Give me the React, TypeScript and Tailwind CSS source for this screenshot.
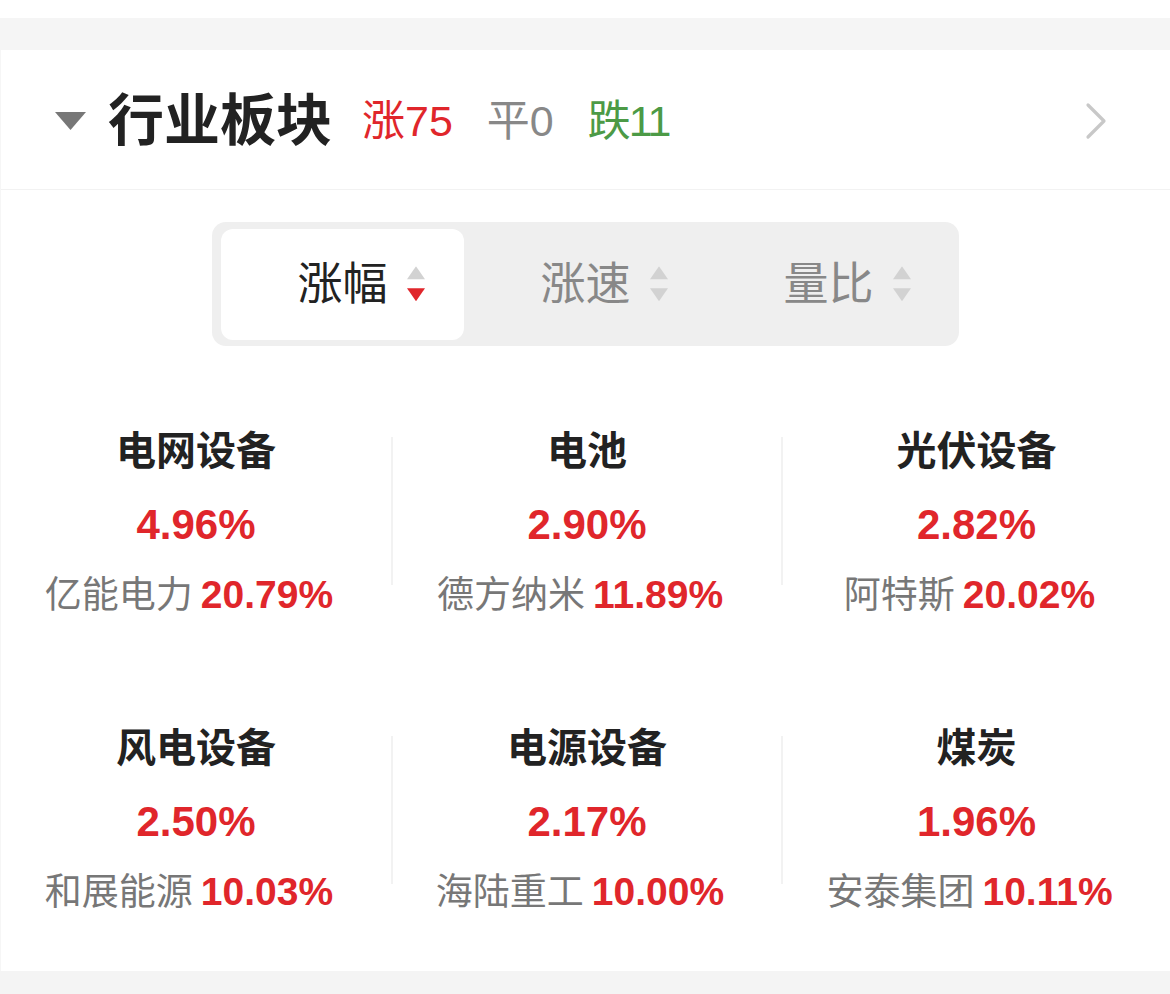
import React from "react";

const cells = [
  { name: "电网设备", pct: "4.96%", stock: "亿能电力", sp: "20.79%" },
  { name: "电池", pct: "2.90%", stock: "德方纳米", sp: "11.89%" },
  { name: "光伏设备", pct: "2.82%", stock: "阿特斯", sp: "20.02%" },
  { name: "风电设备", pct: "2.50%", stock: "和展能源", sp: "10.03%" },
  { name: "电源设备", pct: "2.17%", stock: "海陆重工", sp: "10.00%" },
  { name: "煤炭", pct: "1.96%", stock: "安泰集团", sp: "10.11%" },
];

function SortIcon({ active }: { active: boolean }) {
  return (
    <svg width="18" height="36" viewBox="0 0 18 36" className="absolute left-full top-1/2 -translate-y-[52%] ml-[19px]">
      <polygon points="0,13 9,0 18,13" fill="#d2d2d2" />
      <polygon points="0,22 18,22 9,35" fill={active ? "#e0262b" : "#d2d2d2"} />
    </svg>
  );
}

function Cell({ c }: { c: (typeof cells)[number] }) {
  return (
    <div className="flex flex-col items-center">
      <div className="text-[40px] leading-[52px] font-bold text-[#222]">{c.name}</div>
      <div className="mt-[22px] text-[42px] leading-[52px] font-semibold text-[#e0262b]">{c.pct}</div>
      <div className="mt-[18px] mr-[14px] leading-[52px] whitespace-nowrap flex items-baseline">
        <span className="text-[37px] text-[#777]">{c.stock}</span>
        <span className="ml-[8px] text-[39px] font-semibold text-[#e0262b]">{c.sp}</span>
      </div>
    </div>
  );
}

function Row({ items, top }: { items: (typeof cells)[number][]; top: string }) {
  return (
    <div className="flex">
      <div className="w-[390px]">
        <Cell c={items[0]} />
      </div>
      <div className={`w-[2px] h-[148px] bg-[#f2f2f2] ${top}`} />
      <div className="w-[388px]">
        <Cell c={items[1]} />
      </div>
      <div className={`w-[2px] h-[148px] bg-[#f2f2f2] ${top}`} />
      <div className="flex-1">
        <Cell c={items[2]} />
      </div>
    </div>
  );
}

export default function App() {
  const tabs = [
    { label: "涨幅", active: true },
    { label: "涨速", active: false },
    { label: "量比", active: false },
  ];
  return (
    <div className="w-[1170px] h-[994px] flex flex-col bg-white font-['Liberation_Sans','Noto_Sans_CJK_SC',sans-serif] overflow-hidden">
      <div className="h-[18px] bg-white" />
      <div className="h-[32px] bg-[#f5f5f5]" />
      <div className="flex-1 flex flex-col bg-white border-l border-[#f6f6f6]">
        <div className="h-[140px] flex items-center border-b border-[#f2f2f2] pl-[54px] pr-[62px] pt-[3px]">
          <svg width="31" height="18" viewBox="0 0 31 18" className="mr-[22px]">
            <polygon points="0,0 31,0 15.5,18" fill="#777" />
          </svg>
          <div className="text-[56px] leading-none font-bold text-[#222]">行业板块</div>
          <div className="ml-[30px] text-[43px] leading-none text-[#e0262b]">涨75</div>
          <div className="ml-[34px] text-[43px] leading-none text-[#888]">平0</div>
          <div className="ml-[34px] text-[43px] leading-none text-[#4c9a46] tracking-[-2px]">跌11</div>
          <div className="flex-1" />
          <svg width="24" height="38" viewBox="0 0 24 38">
            <polyline points="4,3 20,19 4,35" fill="none" stroke="#c8c8c8" strokeWidth="3.2" strokeLinecap="round" strokeLinejoin="round" />
          </svg>
        </div>
        <div className="mt-[32px] ml-[211px] w-[747px] h-[124px] bg-[#efefef] rounded-[14px] pt-[7px] pb-[6px] px-[9px] grid grid-cols-3">
          {tabs.map((t) => (
            <div
              key={t.label}
              className={`flex items-center justify-center rounded-[12px] ${t.active ? "bg-white" : ""}`}
            >
              <span className={`relative text-[45px] leading-none ${t.active ? "text-[#222]" : "text-[#888]"}`}>
                {t.label}
                <SortIcon active={t.active} />
              </span>
            </div>
          ))}
        </div>
        <div className="mt-[79px] flex flex-col gap-[100px]">
          <Row items={cells.slice(0, 3)} top="mt-[12px]" />
          <Row items={cells.slice(3, 6)} top="mt-[14px]" />
        </div>
      </div>
      <div className="h-[23px] bg-[#f4f4f4]" />
    </div>
  );
}
